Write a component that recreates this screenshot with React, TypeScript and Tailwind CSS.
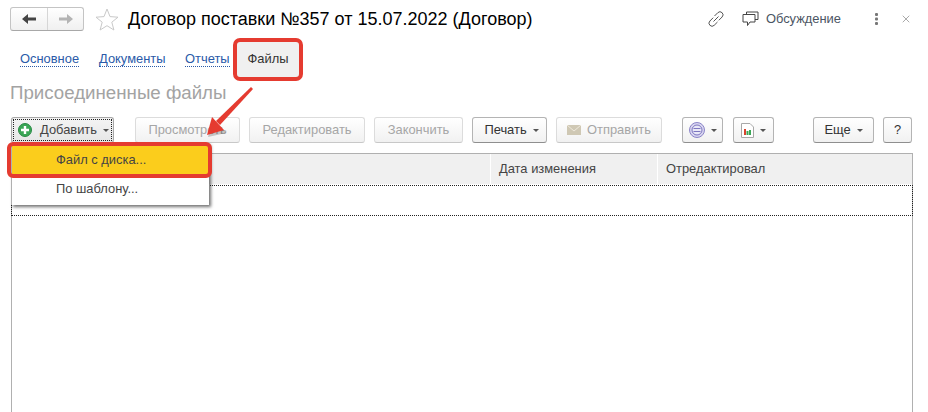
import React from 'react';
import { X } from 'lucide-react';

const Caret = () => <span className="inline-block w-0 h-0 border-x-[3.5px] border-x-transparent border-t-[3.5px] border-t-[#555]" />;

const ToolButton = ({ width, label, disabled, caret, children }: { width: string; label?: string; disabled?: boolean; caret?: boolean; children?: React.ReactNode }) => (
    <div className={`${width} h-[26px] shrink-0 flex items-center justify-center gap-[6px] rounded-[3px] border bg-gradient-to-b from-white to-[#f1f1f1] ${disabled ? 'border-[#dcdcdc] border-b-[#c8c8c8] text-[#a6a6a6]' : 'border-[#b4b4b4] border-b-[#8f8f8f] text-[#333]'}`}>
        {children}
        {label && <span>{label}</span>}
        {caret && <Caret />}
    </div>
);

const Tab = ({ label, width }: { label: string; width: string }) => (
    <div className={`${width} shrink-0 text-[#2a5aa8]`}>
        <span className="border-b border-dotted border-[#2a5aa8] leading-[14px] inline-block">{label}</span>
    </div>
);

const App: React.FC = () => {
    return (
        <div className="relative w-[928px] h-[412px] overflow-hidden bg-white font-['Liberation_Sans',Arial,sans-serif] text-[12.9px]">
            {/* title row */}
            <div className="flex items-center h-[24px] mt-[7px] ml-[10px]">
                <div className="flex w-[74px] h-[24px] rounded-[3px] border border-[#c4c4c4] border-b-[#a8a8a8] bg-gradient-to-b from-white to-[#f0f0f0]">
                    <div className="w-[37px] flex items-center justify-center border-r border-[#d6d6d6]">
                        <svg width="14" height="10" viewBox="0 0 14 10"><path d="M0 5 L6 0 V3.4 H14 V6.6 H6 V10 Z" fill="#444" /></svg>
                    </div>
                    <div className="flex-1 flex items-center justify-center">
                        <svg width="14" height="10" viewBox="0 0 14 10"><path d="M14 5 L8 0 V3.4 H0 V6.6 H8 V10 Z" fill="#b4b4b4" /></svg>
                    </div>
                </div>
                <svg className="ml-[11px]" width="24" height="23" viewBox="0 0 24 23">
                    <path d="M12 1 L15 8.6 L23 9.2 L16.8 14.2 L18.9 22 L12 17.7 L5.1 22 L7.2 14.2 L1 9.2 L9 8.6 Z" fill="#fff" stroke="#c9c9c9" strokeWidth="1" />
                </svg>
                <div className="ml-[9px] text-[18px] leading-[24px] text-black whitespace-nowrap">Договор поставки №357 от 15.07.2022 (Договор)</div>
                <div className="ml-auto flex items-center text-[#4b5563] pr-[16px]">
                    <svg width="16" height="16" viewBox="0 0 16 16" fill="none" stroke="#555" strokeWidth="1">
                        <path d="M6.5 5 L9.8 1.7 a2.4 2.4 0 0 1 4.3 4.3 L10.8 9.3" />
                        <path d="M9.5 11 L6.2 14.3 a2.4 2.4 0 0 1 -4.3 -4.3 L5.2 6.7" />
                        <path d="M5.5 10.5 L10.5 5.5" />
                    </svg>
                    <svg className="ml-[18px]" width="17" height="16" viewBox="0 0 17 16" fill="none" stroke="#444" strokeWidth="1">
                        <path d="M4.5 3.5 V1 H16 V8.5 H13" />
                        <path d="M1 3.5 H13 V11 H8 L5.5 14.5 V11 H1 Z" />
                    </svg>
                    <span className="ml-[7px]">Обсуждение</span>
                    <svg className="ml-[34px]" width="3" height="12" viewBox="0 0 3 12" fill="#777">
                        <rect width="3" height="3" rx="1" /><rect y="4.5" width="3" height="3" rx="1" /><rect y="9" width="3" height="3" rx="1" />
                    </svg>
                    <X size={12} strokeWidth={1} className="ml-[22px] text-[#555]" />
                </div>
            </div>

            {/* tabs */}
            <div className="flex items-center h-[20px] mt-[18px] ml-[20px]">
                <Tab label="Основное" width="w-[79px]" />
                <Tab label="Документы" width="w-[86px]" />
                <Tab label="Отчеты" width="w-[63px]" />
                <div className="text-[#333] ml-[-1px]">Файлы</div>
            </div>

            <div className="ml-[10px] mt-[13px] h-[22px] text-[18.7px] leading-[22px] text-[#a3a3a3]">Присоединенные файлы</div>

            {/* toolbar */}
            <div className="flex ml-[11px] mt-[13px]">
                <div className="relative w-[103px] h-[26px] shrink-0 flex items-center rounded-[3px] border border-[#a8a8a8] border-b-[#8f8f8f] bg-gradient-to-b from-[#f4f4f4] to-[#e6e6e6] pl-[6px] text-[#444]">
                    <span className="absolute left-[1px] top-[1px] right-[1px] bottom-[1px] border border-dotted border-[#222]" />
                    <svg width="14" height="14" viewBox="0 0 14 14">
                        <circle cx="7" cy="7" r="6.5" fill="#3aa655" stroke="#2a8a45" />
                        <path d="M7 3 V11 M3 7 H11" stroke="#fff" strokeWidth="2.4" />
                    </svg>
                    <span className="ml-[8px]">Добавить</span>
                    <span className="ml-[6px] flex"><Caret /></span>
                </div>
                <div className="w-[21px] shrink-0" />
                <ToolButton width="w-[105px]" label="Просмотреть" disabled />
                <div className="w-[9px] shrink-0" />
                <ToolButton width="w-[116px]" label="Редактировать" disabled />
                <div className="w-[9px] shrink-0" />
                <ToolButton width="w-[89px]" label="Закончить" disabled />
                <div className="w-[9px] shrink-0" />
                <ToolButton width="w-[75px] pl-[4px]" label="Печать" caret />
                <div className="w-[9px] shrink-0" />
                <ToolButton width="w-[106px]" label="Отправить" disabled>
                    <svg width="14" height="10" viewBox="0 0 14 10">
                        <rect width="14" height="10" fill="#cfc8b4" />
                        <path d="M0 0 L7 6 L14 0" fill="none" stroke="#eee9dc" />
                    </svg>
                </ToolButton>
                <div className="w-[20px] shrink-0" />
                <ToolButton width="w-[41px]" caret>
                    <svg width="16" height="16" viewBox="0 0 16 16" fill="none">
                        <circle cx="8" cy="8" r="7.5" fill="#d9d6f0" stroke="#8a84c8" />
                        <circle cx="8" cy="8" r="5" fill="#e9e8f7" stroke="#7d76c0" />
                        <path d="M4.5 6.5 H11.5 M4.5 9.5 H11.5" stroke="#7d76c0" />
                    </svg>
                </ToolButton>
                <div className="w-[10px] shrink-0" />
                <ToolButton width="w-[41px]" caret>
                    <svg width="13" height="15" viewBox="0 0 13 15">
                        <path d="M0.5 0.5 H9 L12.5 4 V14.5 H0.5 Z" fill="#fff" stroke="#a8a8a8" />
                        <rect x="3" y="6" width="2" height="6" fill="#d8442e" />
                        <rect x="5.5" y="8" width="2" height="4" fill="#3aa655" />
                        <rect x="8" y="7" width="2" height="5" fill="#3aa655" />
                    </svg>
                </ToolButton>
                <div className="w-[39px] shrink-0" />
                <ToolButton width="w-[61px]" label="Еще" caret />
                <div className="w-[9px] shrink-0" />
                <ToolButton width="w-[29px]" label="?" />
            </div>

            {/* table */}
            <div className="ml-[11px] mt-[10px] w-[902px] h-[260px] border border-[#b0b0b0] border-b-0">
                <div className="flex h-[31px] bg-[#f0f0f0] border-b border-white text-[#444]">
                    <div className="w-[479px] border-r border-[#fff]" />
                    <div className="w-[167px] border-r border-[#fff] pl-[8px] leading-[30px]">Дата изменения</div>
                    <div className="flex-1 pl-[8px] leading-[30px]">Отредактировал</div>
                </div>
                <div className="h-[31px] -mx-[1px] border border-dotted border-[#222]" />
            </div>

            {/* dropdown */}
            <div className="absolute left-[11px] top-[143px] w-[198px] h-[62px] bg-white shadow-[2px_2px_3px_rgba(0,0,0,0.55)] border-l border-[#b0b0b0]">
                <div className="h-[28px] mt-[3px] bg-[#fbcd1c] pl-[44px] leading-[28px] text-[#444]">Файл с диска...</div>
                <div className="pl-[44px] mt-[5px] leading-[20px] text-[#444]">По шаблону...</div>
            </div>

            {/* red callouts */}
            <div className="absolute left-[7px] top-[142px] w-[205px] h-[36px] rounded-[6px] border-[4px] border-[#e53b30]" />
            <div className="absolute left-[233px] top-[38px] w-[70px] h-[43px] rounded-[7px] border-[4px] border-[#e53b30] bg-[#f0f0f0] flex items-center justify-center text-[#333] pb-[1px]">Файлы</div>
            <svg className="absolute left-[200px] top-[85px]" width="60" height="56" viewBox="0 0 60 56">
                <path d="M8 52 L13 34 L26 48 Z" fill="#000" opacity="0.2" />
                <path d="M51 2 L53 4 L20 40 L16 36 Z" fill="#e53b30" />
                <path d="M7 50 L12 32 L24 45 Z" fill="#e53b30" />
            </svg>
        </div>
    );
};

export default App;
